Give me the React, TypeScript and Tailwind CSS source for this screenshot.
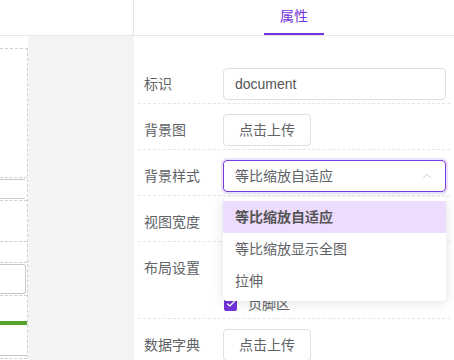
import React from 'react';
import { Check, ChevronUp } from 'lucide-react';

const font = { fontFamily: '"Liberation Sans", "Noto Sans CJK SC", sans-serif' };

const options = ['等比缩放自适应', '等比缩放显示全图', '拉伸'];

const Row: React.FC<{ label: string; children?: React.ReactNode; top?: boolean; className?: string }> = ({
  label,
  children,
  top = false,
  className = 'pb-[3px]',
}) => (
  <div className={`flex border-b border-dashed border-[#e6e6e6] pt-[10px] ${top ? 'items-start' : 'items-center'} ${className}`}>
    <div className={`w-[85px] shrink-0 pl-[6px] text-[14px] text-[#606266] ${top ? 'leading-[32px]' : ''}`}>{label}</div>
    <div className="flex-1 pr-[4px]">{children}</div>
  </div>
);

const UploadButton = () => (
  <button className="h-[32px] w-[88px] rounded-[4px] border border-[#dcdfe6] bg-white text-[14px] text-[#606266]">
    点击上传
  </button>
);

const Checkbox = () => (
  <span className="flex h-[13px] w-[13px] items-center justify-center rounded-[2px] bg-[#7232dc]">
    <Check size={10} strokeWidth={3.5} className="text-white" />
  </span>
);

const Canvas = () => (
  <div className="w-[28px] bg-white pt-[12px]">
    <div className="h-[330px] border-t border-r border-dashed border-[#cfcfcf]">
      <div className="h-[128px]" />
      <div className="border-y border-dashed border-[#cfcfcf] py-[1px]">
        <div className="h-[20px] w-[25px] border-y border-[#c8c8c8]" />
      </div>
      <div className="h-[41px] border-b border-dashed border-[#cfcfcf]" />
      <div className="h-[20px]" />
      <div className="border-y border-dashed border-[#cfcfcf] py-[1px]">
        <div className="h-[30px] w-[26px] rounded-r-[3px] border border-l-0 border-[#c8c8c8]" />
      </div>
      <div className="h-[25px]" />
      <div className="h-[4px] bg-[#52a22e]" />
      <div className="h-[30px]" />
      <div className="border-t border-[#c8c8c8] pt-[2px]">
        <div className="border-t border-dashed border-[#cfcfcf]" />
      </div>
    </div>
  </div>
);

export default function App() {
  return (
    <div className="flex h-[360px] w-[454px] flex-col overflow-hidden bg-white" style={font}>
      <div className="flex h-[36px] shrink-0 border-b border-[#e5e5e5]">
        <div className="w-[134px] border-r border-[#e5e5e5]" />
        <div className="flex flex-1 justify-center">
          <div className="flex h-[35px] w-[60px] items-center justify-center border-b-2 border-[#7232dc] text-[14px] text-[#7232dc]">
            属性
          </div>
        </div>
      </div>

      <div className="flex flex-1">
        <div className="flex w-[134px] bg-[#f4f4f4]">
          <Canvas />
        </div>

        <div className="relative flex-1 px-[4px] pt-[22px]">
          <Row label="标识">
            <div className="flex h-[32px] items-center rounded-[4px] border border-[#dcdfe6] px-[11px] text-[14px] text-[#555]">
              document
            </div>
          </Row>
          <Row label="背景图">
            <UploadButton />
          </Row>
          <Row label="背景样式">
            <div className="relative">
              <div className="flex h-[32px] items-center justify-between rounded-[4px] border border-[#7a3ce0] px-[11px] text-[14px] text-[#606266] ring-2 ring-[#ece2fb]">
                <span>等比缩放自适应</span>
                <ChevronUp size={14} strokeWidth={1.5} className="text-[#c0c4cc]" />
              </div>
              <div className="absolute top-[37px] left-0 z-10 w-full rounded-[4px] bg-white py-[4px] shadow-[0_2px_12px_rgba(0,0,0,0.12)]">
                {options.map((o, i) => (
                  <div
                    key={o}
                    className={`flex h-[32px] items-center px-[12px] text-[14px] ${
                      i === 0 ? 'bg-[#eddcfd] font-bold text-[#555]' : 'text-[#606266]'
                    }`}
                  >
                    {o}
                  </div>
                ))}
              </div>
            </div>
          </Row>
          <Row label="视图宽度">
            <div className="h-[32px]" />
          </Row>
          <Row label="布局设置" top className="pb-0">
            <div className="flex h-[32px] items-center gap-[10px] text-[14px] text-[#606266]">
              <Checkbox />
              页眉区
            </div>
            <div className="mt-[6px] flex h-[28px] items-center gap-[11px] pl-[1px] text-[14px] text-[#606266]">
              <Checkbox />
              页脚区
            </div>
          </Row>
          <Row label="数据字典">
            <UploadButton />
          </Row>
        </div>
      </div>
    </div>
  );
}
